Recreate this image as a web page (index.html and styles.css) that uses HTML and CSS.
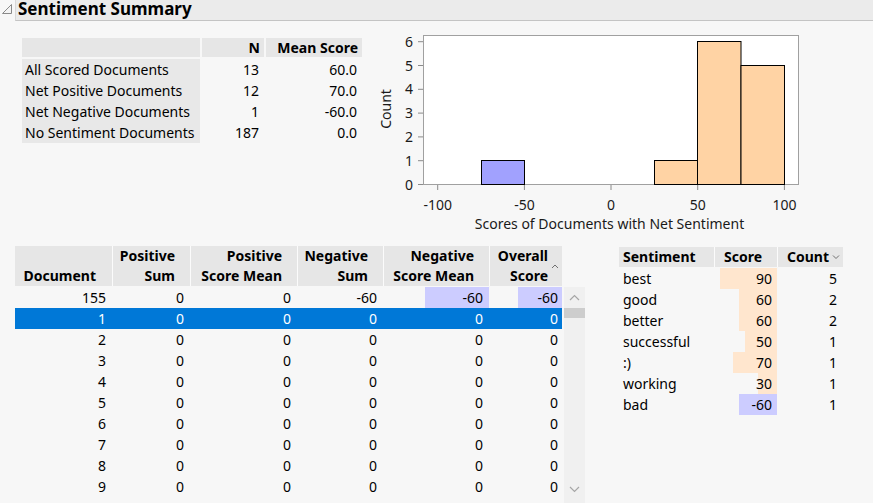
FILE: index.html
```html
<!DOCTYPE html>
<html>
<head>
<meta charset="utf-8">
<link rel="stylesheet" href="styles.css">
</head>
<body>
<div class="titlebar">
  <svg class="disclose" width="15" height="20" viewBox="0 0 15 20"><polygon points="11.5,4.5 11.5,13.5 2.5,13.5" fill="#f4f4f4" stroke="#8a8a8a" stroke-width="1"/></svg>
  <div class="title">Sentiment Summary</div>
</div>

<div class="top">
  <div class="summary">
    <div class="h lab"></div><div class="h num">N</div><div class="h num">Mean Score</div>
    <div class="lab">All Scored Documents</div><div class="num">13</div><div class="num">60.0</div>
    <div class="lab">Net Positive Documents</div><div class="num">12</div><div class="num">70.0</div>
    <div class="lab">Net Negative Documents</div><div class="num">1</div><div class="num">-60.0</div>
    <div class="lab">No Sentiment Documents</div><div class="num">187</div><div class="num">0.0</div>
  </div>

  <svg class="chart" width="440" height="205" viewBox="0 0 440 205">
    <rect x="48.5" y="5.5" width="375" height="149" fill="#ffffff" stroke="#a0a0a0"/>
    <g stroke="#000" stroke-width="1">
      <rect x="106.5" y="130.5" width="43" height="24" fill="#a1a1fe"/>
      <rect x="279.5" y="130.5" width="43" height="24" fill="#ffd3a4"/>
      <rect x="322.5" y="11.5" width="43.5" height="143" fill="#ffd3a4"/>
      <rect x="366" y="35.5" width="43.5" height="119" fill="#ffd3a4"/>
    </g>
    <g stroke="#8a8a8a" stroke-width="1">
      <line x1="43" y1="154.5" x2="48" y2="154.5"/>
      <line x1="43" y1="130.7" x2="48" y2="130.7"/>
      <line x1="43" y1="106.9" x2="48" y2="106.9"/>
      <line x1="43" y1="83.1" x2="48" y2="83.1"/>
      <line x1="43" y1="59.3" x2="48" y2="59.3"/>
      <line x1="43" y1="35.5" x2="48" y2="35.5"/>
      <line x1="43" y1="11.7" x2="48" y2="11.7"/>
      <line x1="62.7" y1="155" x2="62.7" y2="160"/>
      <line x1="149.4" y1="155" x2="149.4" y2="160"/>
      <line x1="236" y1="155" x2="236" y2="160"/>
      <line x1="322.7" y1="155" x2="322.7" y2="160"/>
      <line x1="409.4" y1="155" x2="409.4" y2="160"/>
    </g>
    <g class="tick" text-anchor="end">
      <text x="38" y="159.5">0</text>
      <text x="38" y="135.7">1</text>
      <text x="38" y="111.9">2</text>
      <text x="38" y="88.1">3</text>
      <text x="38" y="64.3">4</text>
      <text x="38" y="40.5">5</text>
      <text x="38" y="16.7">6</text>
    </g>
    <g class="tick" text-anchor="middle">
      <text x="62.7" y="180">-100</text>
      <text x="149.4" y="180">-50</text>
      <text x="236" y="180">0</text>
      <text x="322.7" y="180">50</text>
      <text x="409.4" y="180">100</text>
    </g>
    <text class="tick" x="234.5" y="199" text-anchor="middle">Scores of Documents with Net Sentiment</text>
    <text class="tick" transform="translate(16 79) rotate(-90)" text-anchor="middle">Count</text>
  </svg>
</div>

<div class="bottom">
  <div class="docs">
    <div class="drow head">
      <div class="dh left"><span>Document</span></div>
      <div class="dh"><span>Positive<br>Sum</span></div>
      <div class="dh"><span>Positive<br>Score Mean</span></div>
      <div class="dh"><span>Negative<br>Sum</span></div>
      <div class="dh"><span>Negative<br>Score Mean</span></div>
      <div class="dh last"><span>Overall<br>Score</span><svg class="sort" width="14" height="8" viewBox="0 0 14 8"><polyline points="4,6 7,3 10,6" fill="none" stroke="#707070" stroke-width="1"/></svg></div>
    </div>
    <div class="drow">
      <div class="dc">155</div><div class="dc">0</div><div class="dc">0</div><div class="dc">-60</div>
      <div class="dc bar neg" style="--w:64px">-60</div><div class="dc bar neg" style="--w:44px">-60</div>
    </div>
    <div class="drow sel">
      <div class="dc">1</div><div class="dc">0</div><div class="dc">0</div><div class="dc">0</div><div class="dc">0</div><div class="dc">0</div>
    </div>
    <div class="drow"><div class="dc">2</div><div class="dc">0</div><div class="dc">0</div><div class="dc">0</div><div class="dc">0</div><div class="dc">0</div></div>
    <div class="drow"><div class="dc">3</div><div class="dc">0</div><div class="dc">0</div><div class="dc">0</div><div class="dc">0</div><div class="dc">0</div></div>
    <div class="drow"><div class="dc">4</div><div class="dc">0</div><div class="dc">0</div><div class="dc">0</div><div class="dc">0</div><div class="dc">0</div></div>
    <div class="drow"><div class="dc">5</div><div class="dc">0</div><div class="dc">0</div><div class="dc">0</div><div class="dc">0</div><div class="dc">0</div></div>
    <div class="drow"><div class="dc">6</div><div class="dc">0</div><div class="dc">0</div><div class="dc">0</div><div class="dc">0</div><div class="dc">0</div></div>
    <div class="drow"><div class="dc">7</div><div class="dc">0</div><div class="dc">0</div><div class="dc">0</div><div class="dc">0</div><div class="dc">0</div></div>
    <div class="drow"><div class="dc">8</div><div class="dc">0</div><div class="dc">0</div><div class="dc">0</div><div class="dc">0</div><div class="dc">0</div></div>
    <div class="drow"><div class="dc">9</div><div class="dc">0</div><div class="dc">0</div><div class="dc">0</div><div class="dc">0</div><div class="dc">0</div></div>
  </div>

  <div class="scrollbar">
    <svg class="sarrow" width="21" height="20" viewBox="0 0 21 20"><polyline points="6,13 10.5,8.5 15,13" fill="none" stroke="#a6a6a6" stroke-width="1.2"/></svg>
    <div class="thumb"></div>
    <div class="track"></div>
    <svg class="sarrow down" width="21" height="20" viewBox="0 0 21 20"><polyline points="6,7 10.5,11.5 15,7" fill="none" stroke="#a6a6a6" stroke-width="1.2"/></svg>
  </div>

  <div class="words">
    <div class="wrow head">
      <div class="wh left">Sentiment</div>
      <div class="wh">Score</div>
      <div class="wh"><span>Count</span><svg class="sort" width="14" height="8" viewBox="0 0 14 8"><polyline points="4,2.5 7,5.5 10,2.5" fill="none" stroke="#707070" stroke-width="1"/></svg></div>
    </div>
    <div class="wrow"><div class="wc left">best</div><div class="wc bar pos" style="--w:57px">90</div><div class="wc">5</div></div>
    <div class="wrow"><div class="wc left">good</div><div class="wc bar pos" style="--w:38px">60</div><div class="wc">2</div></div>
    <div class="wrow"><div class="wc left">better</div><div class="wc bar pos" style="--w:38px">60</div><div class="wc">2</div></div>
    <div class="wrow"><div class="wc left">successful</div><div class="wc bar pos" style="--w:32px">50</div><div class="wc">1</div></div>
    <div class="wrow"><div class="wc left">:)</div><div class="wc bar pos" style="--w:44px">70</div><div class="wc">1</div></div>
    <div class="wrow"><div class="wc left">working</div><div class="wc bar pos" style="--w:19px">30</div><div class="wc">1</div></div>
    <div class="wrow"><div class="wc left">bad</div><div class="wc bar neg" style="--w:38px">-60</div><div class="wc">1</div></div>
  </div>
</div>
</body>
</html>
```

FILE: styles.css
```css
* { box-sizing: border-box; }
html, body {
  margin: 0;
  padding: 0;
  background: #f7f7f7;
  font-family: "Noto Sans", "Open Sans", sans-serif;
  font-size: 14px;
  color: #000;
  overflow: hidden;
}
.titlebar {
  display: flex;
  height: 21px;
}
.disclose { flex: none; }
.title {
  flex: 1;
  background: #ebebeb;
  border-bottom: 1px solid #c4c4c4;
  border-left: 1px solid #d8d8d8;
  font-weight: bold;
  font-size: 17px;
  line-height: 18px;
  padding-top: 0;
  padding-left: 2px;
  white-space: nowrap;
}

.top {
  display: flex;
  align-items: flex-start;
  padding-left: 22px;
  padding-top: 9px;
  height: 214px;
}
.summary {
  display: grid;
  grid-template-columns: 178px 62px 96px;
  grid-template-rows: 21px 21px 21px 21px 21px;
  column-gap: 2px;
  margin-top: 8px;
}
.summary > div {
  line-height: 21px;
  white-space: nowrap;
}
.summary .h {
  background: #e6e6e6;
  background-clip: padding-box;
  border-bottom: 2px solid transparent;
  font-weight: bold;
  line-height: 19px;
}
.summary .h.num { padding-right: 4px; }
.summary .lab {
  background: #e8e8e8;
  padding-left: 3px;
}
.summary .h.lab { background: #e6e6e6; background-clip: padding-box; }
.summary .num {
  text-align: right;
  padding-right: 5px;
}
.chart {
  flex: none;
  margin-left: 13px;
  display: block;
}
.tick {
  font-family: "Noto Sans", "Open Sans", sans-serif;
  font-size: 14px;
  fill: #1a1a1a;
}

.bottom {
  display: flex;
  align-items: flex-start;
  padding-left: 15px;
  margin-top: 11px;
}
.docs { flex: none; width: 547px; }
.drow {
  display: grid;
  grid-template-columns: 98px 78px 107px 86px 106px 72px;
  height: 21px;
}
.drow.head {
  height: 41px;
  border-bottom: 2px solid #f7f7f7;
}
.dh {
  background: #e6e6e6;
  border-right: 1px solid #fbfbfb;
  font-weight: bold;
  line-height: 20px;
  text-align: right;
  display: flex;
  justify-content: flex-end;
  align-items: flex-end;
  padding-right: 15px;
  white-space: nowrap;
}
.dh.left { padding-right: 16px; }
.dh.last {
  border-right: none;
  padding-right: 0;
}
.dh .sort { align-self: center; flex: none; margin-bottom: 1px; }
.dc {
  line-height: 21px;
  text-align: right;
  padding-right: 6px;
  border-right: 1px solid transparent;
  white-space: nowrap;
}
.drow .dc:last-child { border-right: none; padding-right: 4px; }
.drow.sel { background: #0078d7; color: #fff; }

.bar {
  background-repeat: no-repeat;
  background-position: right top;
  background-size: var(--w) 100%;
}
.neg { background-image: linear-gradient(#ccccff, #ccccff); }
.pos { background-image: linear-gradient(#ffe6ce, #ffe6ce); }

.scrollbar {
  flex: none;
  width: 21px;
  height: 216px;
  margin-left: 2px;
  margin-top: 41px;
  background: #f0f0f0;
  display: flex;
  flex-direction: column;
}
.sarrow { display: block; flex: none; }
.sarrow.down { margin-bottom: 3px; }
.thumb {
  height: 10px;
  background: #cdcdcd;
  margin-top: 1px;
  flex: none;
}
.track { flex: 1; }

.words {
  flex: none;
  margin-left: 34px;
  margin-top: 1px;
}
.wrow {
  display: grid;
  grid-template-columns: 96px 63px 65px;
  height: 21px;
}
.wrow.head {
  height: 21px;
  border-bottom: 1px solid #f7f7f7;
}
.wh {
  background: #e6e6e6;
  border-right: 1px solid #fbfbfb;
  font-weight: bold;
  line-height: 20px;
  text-align: right;
  padding-right: 15px;
  display: flex;
  justify-content: flex-end;
  align-items: center;
  white-space: nowrap;
}
.wh.left { justify-content: flex-start; padding-left: 4px; }
.wh:last-child { border-right: none; padding-right: 0; }
.wc {
  line-height: 21px;
  text-align: right;
  padding-right: 5px;
  border-right: 1px solid transparent;
  white-space: nowrap;
}
.wc.left { text-align: left; padding-left: 4px; }
.wrow .wc:last-child { border-right: none; padding-right: 6px; }
```
